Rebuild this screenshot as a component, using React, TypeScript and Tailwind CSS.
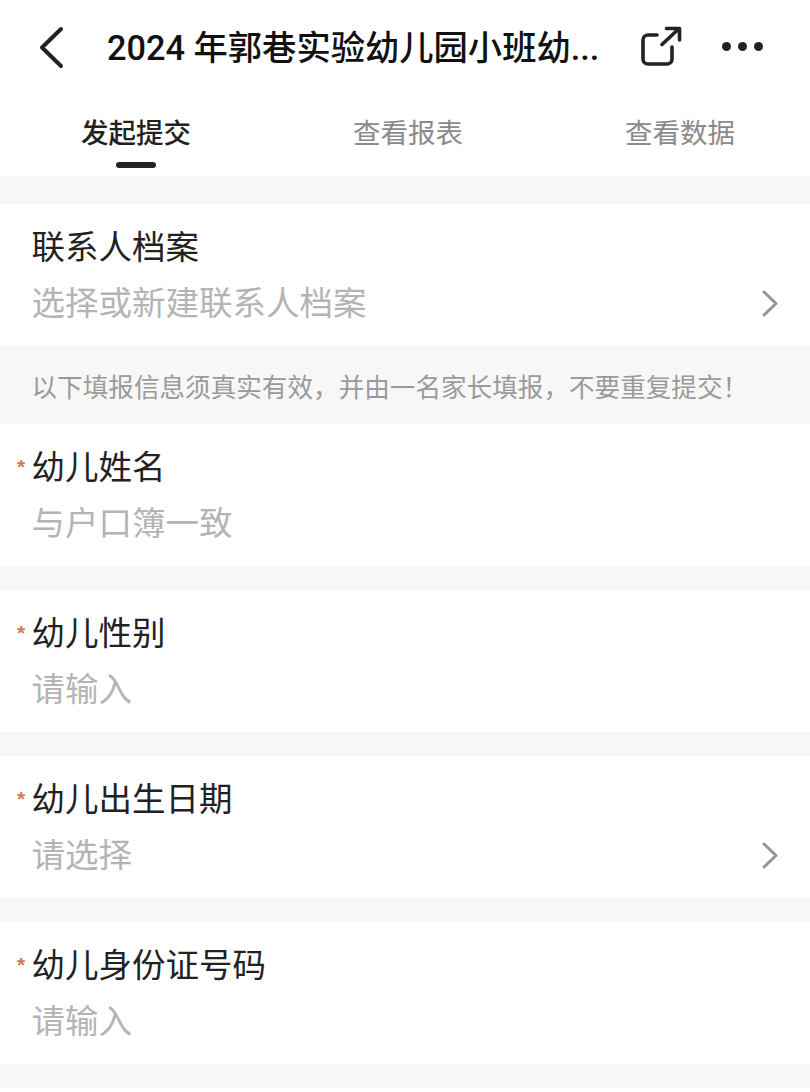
import React from 'react';

const fields = [
  { label: '幼儿姓名', hint: '与户口簿一致', arrow: false },
  { label: '幼儿性别', hint: '请输入', arrow: false },
  { label: '幼儿出生日期', hint: '请选择', arrow: true },
  { label: '幼儿身份证号码', hint: '请输入', arrow: false },
];

function Chevron() {
  return (
    <svg width="18" height="28" viewBox="0 0 18 28" fill="none" className="shrink-0">
      <path d="M3 2 L15 13.5 L3 25" stroke="#949494" strokeWidth="3" strokeLinecap="round" strokeLinejoin="round" />
    </svg>
  );
}

function Field({ label, hint, arrow }: { label: string; hint: string; arrow: boolean }) {
  return (
    <div className="relative flex h-[142px] flex-col bg-white pl-[31.5px] pr-[31px] pt-[22px]">
      <span className="absolute left-[17px] top-[31px] text-[21px] font-bold leading-[24px] text-[#d4784f]">*</span>
      <div className="text-[33.5px] leading-[44px] text-[#222222]">{label}</div>
      <div className="mt-[12px] flex items-center justify-between">
        <span className="text-[33.5px] leading-[44px] text-[#b4b4b4]">{hint}</span>
        {arrow && <Chevron />}
      </div>
    </div>
  );
}

export default function App() {
  return (
    <div className="h-[1092px] w-[810px] overflow-hidden bg-[#f7f7f7] font-['Liberation_Sans','Noto_Sans_CJK_SC',sans-serif]">
      {/* Title bar */}
      <div className="flex h-[95px] items-center bg-white pl-[32px] pr-[47px]">
        <svg width="40" height="44" viewBox="0 0 40 44" fill="none" className="shrink-0">
          <path d="M29 3 L10 21.5 L29 40" stroke="#222222" strokeWidth="4" strokeLinecap="round" strokeLinejoin="round" />
        </svg>
        <div className="ml-[35px] w-[500px] whitespace-nowrap font-['Roboto','Noto_Sans_CJK_SC',sans-serif] text-[34.3px] font-medium leading-[44px] text-[#111111]">2024 年郭巷实验幼儿园小班幼...</div>
        <svg width="44" height="44" viewBox="0 0 44 44" fill="none" className="ml-[33px] shrink-0">
          <path d="M17 9 H8 a5 5 0 0 0 -5 5 V33 a5 5 0 0 0 5 5 H27 a5 5 0 0 0 5 -5 V21" stroke="#222222" strokeWidth="3.6" strokeLinecap="round" />
          <path d="M22 18.5 L38 3.5 M26.5 2.5 H39.5 V14" stroke="#222222" strokeWidth="3.6" strokeLinecap="round" strokeLinejoin="round" />
        </svg>
        <div className="ml-auto -mt-[3px] flex gap-[7px]">
          <span className="h-[9px] w-[9px] rounded-full bg-[#222222]" />
          <span className="h-[9px] w-[9px] rounded-full bg-[#222222]" />
          <span className="h-[9px] w-[9px] rounded-full bg-[#222222]" />
        </div>
      </div>

      {/* Tabs */}
      <div className="flex h-[81px] justify-between bg-white pl-[81px] pr-[75px]">
        <div className="flex flex-col items-center">
          <span className="mt-[21px] text-[27.5px] font-medium leading-[36px] text-[#222222]">发起提交</span>
          <span className="mt-[10px] h-[6px] w-[40px] rounded-full bg-[#222222]" />
        </div>
        <span className="mt-[21px] text-[27.5px] leading-[36px] text-[#8a8a8a]">查看报表</span>
        <span className="mt-[21px] text-[27.5px] leading-[36px] text-[#8a8a8a]">查看数据</span>
      </div>

      {/* Contact archive */}
      <div className="mt-[28px] flex h-[142px] flex-col bg-white pl-[31.5px] pr-[31px] pt-[22px]">
        <div className="text-[33.5px] leading-[44px] text-[#222222]">联系人档案</div>
        <div className="mt-[12px] flex items-center justify-between">
          <span className="text-[33.5px] leading-[44px] text-[#b4b4b4]">选择或新建联系人档案</span>
          <Chevron />
        </div>
      </div>

      {/* Notice */}
      <div className="flex h-[78px] items-center pl-[31.5px] pt-[6px] text-[25.6px] leading-[34px] whitespace-nowrap text-[#9a9a9a]">
        以下填报信息须真实有效，并由一名家长填报，不要重复提交！
      </div>

      <div className="flex flex-col gap-[24px]">
        {fields.map((f) => (
          <Field key={f.label} label={f.label} hint={f.hint} arrow={f.arrow} />
        ))}
        <div className="h-[20px] bg-white" />
      </div>
    </div>
  );
}
